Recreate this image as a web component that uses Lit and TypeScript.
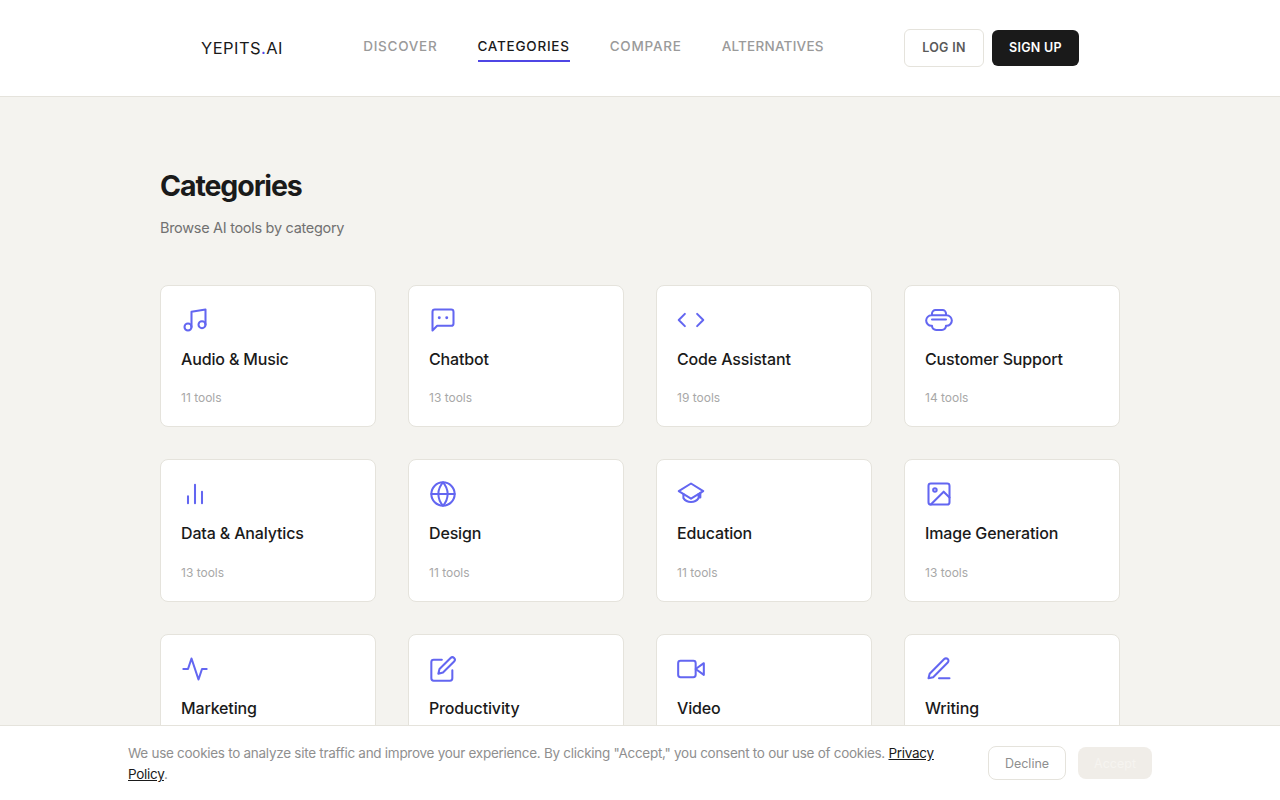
import { LitElement, html, css, svg, TemplateResult } from "lit";
import { customElement } from "lit/decorators.js";

// Icon bodies, all on a 24 unit grid
const icons: Record<string, TemplateResult> = {
  music: svg`<path d="M9 18V5l12-2v13"/><circle cx="6" cy="18" r="3"/><circle cx="18" cy="16" r="3"/>`,
  chat: svg`<path d="M3 5a2 2 0 0 1 2-2h14a2 2 0 0 1 2 2v10a2 2 0 0 1-2 2H7l-4 4z"/><circle class="dot" cx="8.8" cy="10" r="1.25"/><circle class="dot" cx="15.2" cy="10" r="1.25"/>`,
  code: svg`<path d="M17.25 6.75 22.5 12l-5.25 5.25M6.75 17.25 1.5 12l5.25-5.25"/>`,
  support: svg`<path d="M6 8V6.5a3 3 0 0 1 3-3h6a3 3 0 0 1 3 3V8M6 8H5.5a4.5 4.5 0 0 0 0 9H6a3.5 3.5 0 0 0 3.5 3.5h5A3.5 3.5 0 0 0 18 17h.5a4.5 4.5 0 0 0 0-9zM6 11.5h12"/>`,
  bars: svg`<path d="M18 20V10M12 20V4M6 20v-6"/>`,
  globe: svg`<circle cx="12" cy="12" r="10"/><path d="M2 12h20M12 2a15.3 15.3 0 0 1 4 10 15.3 15.3 0 0 1-4 10 15.3 15.3 0 0 1-4-10 15.3 15.3 0 0 1 4-10z"/>`,
  cap: svg`<path d="M12 3l10.5 6.5L12 16 1.5 9.5z"/><path d="M5.5 12v3.5c3 4.5 10 4.5 13 0V12M20 11v4"/>`,
  image: svg`<rect x="3" y="3" width="18" height="18" rx="2"/><circle cx="8.5" cy="8.5" r="1.5"/><path d="M21 15l-5-5L5 21"/>`,
  activity: svg`<path d="M22 12h-4l-3 9L9 3l-3 9H2"/>`,
  edit: svg`<path d="M11 4H4a2 2 0 0 0-2 2v14a2 2 0 0 0 2 2h14a2 2 0 0 0 2-2v-7"/><path d="M18.5 2.5a2.121 2.121 0 0 1 3 3L12 15l-4 1 1-4 9.5-9.5z"/>`,
  video: svg`<path d="M23 7l-7 5 7 5z"/><rect x="1" y="5" width="15" height="14" rx="2"/>`,
  pen: svg`<path d="M12 20h9"/><path d="M16.5 3.5a2.121 2.121 0 0 1 3 3L7 19l-4 1 1-4L16.5 3.5z"/>`,
};

const categories = [
  { name: "Audio & Music", count: 11, icon: "music" },
  { name: "Chatbot", count: 13, icon: "chat" },
  { name: "Code Assistant", count: 19, icon: "code" },
  { name: "Customer Support", count: 14, icon: "support" },
  { name: "Data & Analytics", count: 13, icon: "bars" },
  { name: "Design", count: 11, icon: "globe" },
  { name: "Education", count: 11, icon: "cap" },
  { name: "Image Generation", count: 13, icon: "image" },
  { name: "Marketing", count: 12, icon: "activity" },
  { name: "Productivity", count: 15, icon: "edit" },
  { name: "Video", count: 10, icon: "video" },
  { name: "Writing", count: 16, icon: "pen" },
];

@customElement("app-root")
export class AppRoot extends LitElement {
  static override styles = css`
    :host {
      display: block;
      min-height: 800px;
      background: #f4f3ef;
      color: #1a1a1a;
      font-family: "Inter", "Liberation Sans", sans-serif;
    }
    .header {
      height: 96px;
      background: #fff;
      border-bottom: 1px solid #e5e3dc;
    }
    .header-inner {
      width: 878px;
      margin: 0 auto;
      height: 100%;
      display: flex;
      align-items: center;
      justify-content: space-between;
    }
    .logo {
      font-size: 16.5px;
      letter-spacing: 0.45px;
      color: #1a1a1a;
    }
    .logo span {
      color: #4f46e5;
    }
    .nav {
      display: flex;
      gap: 40px;
      margin-top: -2px;
    }
    .nav a {
      font-size: 13.5px;
      font-weight: 500;
      letter-spacing: 0.75px;
      line-height: 20px;
      padding: 4px 0;
      color: #9a9a9a;
      border-bottom: 2px solid transparent;
    }
    .nav a.narrow {
      letter-spacing: 0.25px;
    }
    .nav a.active {
      color: #1a1a1a;
      border-bottom-color: #4f46e5;
    }
    .actions {
      display: flex;
      align-items: center;
      gap: 8px;
    }
    .btn {
      display: flex;
      align-items: center;
      justify-content: center;
      padding-bottom: 2px;
      font-size: 12.5px;
      font-weight: 600;
      letter-spacing: 0.3px;
      box-sizing: border-box;
    }
    .login {
      width: 80px;
      height: 38px;
      border: 1px solid #e5e3dc;
      border-radius: 6px;
      color: #5a5a5a;
    }
    .signup {
      width: 87px;
      height: 36px;
      border-radius: 6px;
      background: #1a1a1a;
      color: #fff;
    }
    .main {
      width: 960px;
      margin: 0 auto;
      padding: 65px 0 80px;
    }
    h1 {
      margin: 0;
      font-size: 28.5px;
      line-height: 48px;
      font-weight: 700;
      letter-spacing: -1.1px;
      color: #1a1a1a;
    }
    .sub {
      margin: 6px 0 0;
      font-size: 14.5px;
      line-height: 24px;
      letter-spacing: -0.3px;
      color: #717171;
    }
    .grid {
      margin-top: 44.75px;
      display: grid;
      grid-template-columns: repeat(4, 216px);
      gap: 32px;
    }
    .card {
      box-sizing: border-box;
      height: 142.5px;
      padding: 20px;
      background: #fff;
      border: 1px solid #e5e3dc;
      border-radius: 8px;
    }
    .icon {
      display: block;
      width: 28px;
      height: 28px;
      fill: none;
      stroke: #6366f1;
      stroke-width: 1.75;
      stroke-linecap: round;
      stroke-linejoin: round;
    }
    .icon .dot {
      fill: #6366f1;
      stroke: none;
    }
    .name {
      margin-top: 13px;
      font-size: 16px;
      line-height: 24px;
      font-weight: 500;
      letter-spacing: -0.15px;
      color: #1a1a1a;
    }
    .count {
      margin-top: 18.5px;
      font-size: 12px;
      line-height: 18px;
      color: #a8a8a8;
    }
    .cookie {
      position: fixed;
      left: 0;
      right: 0;
      bottom: 0;
      height: 75px;
      box-sizing: border-box;
      background: #fff;
      border-top: 1px solid #e5e3dc;
      display: flex;
      justify-content: center;
      align-items: center;
    }
    .cookie-inner {
      width: 1024px;
      display: flex;
      align-items: center;
      gap: 32px;
    }
    .cookie p {
      flex: 1;
      margin: 0;
      padding-top: 2px;
      font-size: 13.5px;
      line-height: 21px;
      letter-spacing: -0.28px;
      color: #8f8f8f;
    }
    .cookie a {
      color: #1a1a1a;
      text-decoration: underline;
    }
    .cookie-actions {
      display: flex;
      align-items: center;
      gap: 12px;
    }
    .decline,
    .accept {
      display: flex;
      align-items: center;
      justify-content: center;
      box-sizing: border-box;
      font-size: 12.5px;
      border-radius: 8px;
    }
    .decline {
      width: 78px;
      height: 34px;
      border: 1px solid #e5e3dc;
      color: #8f8f8f;
    }
    .accept {
      width: 74px;
      height: 32px;
      background: #f0ede8;
      color: #f6f4f0;
    }
  `;

  renderCard(c: { name: string; count: number; icon: string }) {
    return html`
      <div class="card">
        <svg class="icon" viewBox="0 0 24 24">${icons[c.icon]}</svg>
        <div class="name">${c.name}</div>
        <div class="count">${c.count} tools</div>
      </div>
    `;
  }

  override render() {
    return html`
      <header class="header">
        <div class="header-inner">
          <div class="logo">YEPITS<span>.</span>AI</div>
          <nav class="nav">
            <a>DISCOVER</a>
            <a class="active">CATEGORIES</a>
            <a>COMPARE</a>
            <a class="narrow">ALTERNATIVES</a>
          </nav>
          <div class="actions">
            <div class="btn login">LOG IN</div>
            <div class="btn signup">SIGN UP</div>
          </div>
        </div>
      </header>
      <main class="main">
        <h1>Categories</h1>
        <p class="sub">Browse AI tools by category</p>
        <div class="grid">${categories.map((c) => this.renderCard(c))}</div>
      </main>
      <div class="cookie">
        <div class="cookie-inner">
          <p>
            We use cookies to analyze site traffic and improve your experience. By clicking
            "Accept," you consent to our use of cookies. <a>Privacy Policy</a>.
          </p>
          <div class="cookie-actions">
            <div class="decline">Decline</div>
            <div class="accept">Accept</div>
          </div>
        </div>
      </div>
    `;
  }
}
